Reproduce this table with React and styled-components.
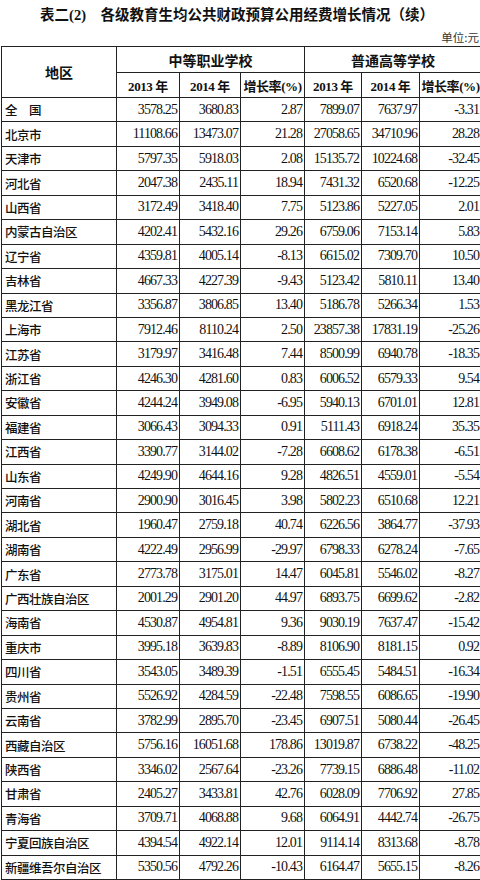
import React from "react";
import styled, { createGlobalStyle } from "styled-components";

const Global = createGlobalStyle`
  html, body { margin: 0; padding: 0; background: #fff; }
  body { width: 480px; height: 880px; overflow: hidden; }
`;

const rows = [
  ["全　国", "3578.25", "3680.83", "2.87", "7899.07", "7637.97", "-3.31"],
  ["北京市", "11108.66", "13473.07", "21.28", "27058.65", "34710.96", "28.28"],
  ["天津市", "5797.35", "5918.03", "2.08", "15135.72", "10224.68", "-32.45"],
  ["河北省", "2047.38", "2435.11", "18.94", "7431.32", "6520.68", "-12.25"],
  ["山西省", "3172.49", "3418.40", "7.75", "5123.86", "5227.05", "2.01"],
  ["内蒙古自治区", "4202.41", "5432.16", "29.26", "6759.06", "7153.14", "5.83"],
  ["辽宁省", "4359.81", "4005.14", "-8.13", "6615.02", "7309.70", "10.50"],
  ["吉林省", "4667.33", "4227.39", "-9.43", "5123.42", "5810.11", "13.40"],
  ["黑龙江省", "3356.87", "3806.85", "13.40", "5186.78", "5266.34", "1.53"],
  ["上海市", "7912.46", "8110.24", "2.50", "23857.38", "17831.19", "-25.26"],
  ["江苏省", "3179.97", "3416.48", "7.44", "8500.99", "6940.78", "-18.35"],
  ["浙江省", "4246.30", "4281.60", "0.83", "6006.52", "6579.33", "9.54"],
  ["安徽省", "4244.24", "3949.08", "-6.95", "5940.13", "6701.01", "12.81"],
  ["福建省", "3066.43", "3094.33", "0.91", "5111.43", "6918.24", "35.35"],
  ["江西省", "3390.77", "3144.02", "-7.28", "6608.62", "6178.38", "-6.51"],
  ["山东省", "4249.90", "4644.16", "9.28", "4826.51", "4559.01", "-5.54"],
  ["河南省", "2900.90", "3016.45", "3.98", "5802.23", "6510.68", "12.21"],
  ["湖北省", "1960.47", "2759.18", "40.74", "6226.56", "3864.77", "-37.93"],
  ["湖南省", "4222.49", "2956.99", "-29.97", "6798.33", "6278.24", "-7.65"],
  ["广东省", "2773.78", "3175.01", "14.47", "6045.81", "5546.02", "-8.27"],
  ["广西壮族自治区", "2001.29", "2901.20", "44.97", "6893.75", "6699.62", "-2.82"],
  ["海南省", "4530.87", "4954.81", "9.36", "9030.19", "7637.47", "-15.42"],
  ["重庆市", "3995.18", "3639.83", "-8.89", "8106.90", "8181.15", "0.92"],
  ["四川省", "3543.05", "3489.39", "-1.51", "6555.45", "5484.51", "-16.34"],
  ["贵州省", "5526.92", "4284.59", "-22.48", "7598.55", "6086.65", "-19.90"],
  ["云南省", "3782.99", "2895.70", "-23.45", "6907.51", "5080.44", "-26.45"],
  ["西藏自治区", "5756.16", "16051.68", "178.86", "13019.87", "6738.22", "-48.25"],
  ["陕西省", "3346.02", "2567.64", "-23.26", "7739.15", "6886.48", "-11.02"],
  ["甘肃省", "2405.27", "3433.81", "42.76", "6028.09", "7706.92", "27.85"],
  ["青海省", "3709.71", "4068.88", "9.68", "6064.91", "4442.74", "-26.75"],
  ["宁夏回族自治区", "4394.54", "4922.14", "12.01", "9114.14", "8313.68", "-8.78"],
  ["新疆维吾尔自治区", "5350.56", "4792.26", "-10.43", "6164.47", "5655.15", "-8.26"],
];

const colWidths = [115, 63, 61, 64, 57, 58, 62];

const Page = styled.div`
  width: 480px;
  color: #141414;
  font-family: "Liberation Serif", "Noto Sans CJK SC", serif;
`;

const Title = styled.h1`
  margin: 0;
  height: 27px;
  display: flex;
  align-items: center;
  justify-content: center;
  padding-right: 6px;
  font-size: 14.5px;
  font-weight: 700;
  font-family: "Liberation Serif", "Noto Sans CJK SC", serif;
  white-space: pre;
  color: #111;
`;

const Unit = styled.div`
  height: 19px;
  display: flex;
  justify-content: flex-end;
  align-items: center;
  padding-right: 1px;
  font-size: 11.5px;
  color: #333;
  font-family: "Noto Sans CJK SC", sans-serif;
`;

const Table = styled.table`
  width: 481px;
  table-layout: fixed;
  border-collapse: collapse;
  margin-left: 1px;
`;

const HeadCell = styled.th`
  border: 1.5px solid #222;
  height: ${(p) => p.$h}px;
  padding: 0;
  text-align: center;
  vertical-align: middle;
  font-size: ${(p) => (p.$small ? 13 : 14)}px;
  font-weight: 700;
  letter-spacing: ${(p) => (p.$small ? "-0.4px" : "0")};
  white-space: nowrap;
  overflow: hidden;
  color: #111;
  font-family: "Liberation Serif", "Noto Sans CJK SC", serif;
`;

const Row = styled.tr`
  height: 24.45px;
`;

const LabelCell = styled.td`
  border: 1.5px solid #222;
  padding: 0 0 0 3px;
  text-align: left;
  white-space: nowrap;
  overflow: hidden;
  font-family: "Noto Sans CJK SC", sans-serif;
  font-size: 12.5px;
  font-weight: 500;
  letter-spacing: -0.5px;
  color: #111;
`;

const NumCell = styled.td`
  border: 1.5px solid #222;
  padding: 0 2px 0 0;
  text-align: right;
  white-space: nowrap;
  overflow: hidden;
  font-family: "Liberation Serif", serif;
  font-size: 14px;
  letter-spacing: -0.9px;
  color: #111;
`;

export default function App() {
  return (
    <Page>
      <Global />
      <Title>{"表二(2)　各级教育生均公共财政预算公用经费增长情况（续）"}</Title>
      <Unit>单位:元</Unit>
      <Table>
        <colgroup>
          {colWidths.map((w, i) => (
            <col key={i} style={{ width: w }} />
          ))}
        </colgroup>
        <thead>
          <tr>
            <HeadCell rowSpan={2} $h={25}>地区</HeadCell>
            <HeadCell colSpan={3} $h={25}>中等职业学校</HeadCell>
            <HeadCell colSpan={3} $h={25}>普通高等学校</HeadCell>
          </tr>
          <tr>
            <HeadCell $h={24} $small>2013 年</HeadCell>
            <HeadCell $h={24} $small>2014 年</HeadCell>
            <HeadCell $h={24} $small>增长率(%)</HeadCell>
            <HeadCell $h={24} $small>2013 年</HeadCell>
            <HeadCell $h={24} $small>2014 年</HeadCell>
            <HeadCell $h={24} $small>增长率(%)</HeadCell>
          </tr>
        </thead>
        <tbody>
          {rows.map((r) => (
            <Row key={r[0]}>
              <LabelCell>{r[0]}</LabelCell>
              {r.slice(1).map((v, i) => (
                <NumCell key={i}>{v}</NumCell>
              ))}
            </Row>
          ))}
        </tbody>
      </Table>
    </Page>
  );
}
